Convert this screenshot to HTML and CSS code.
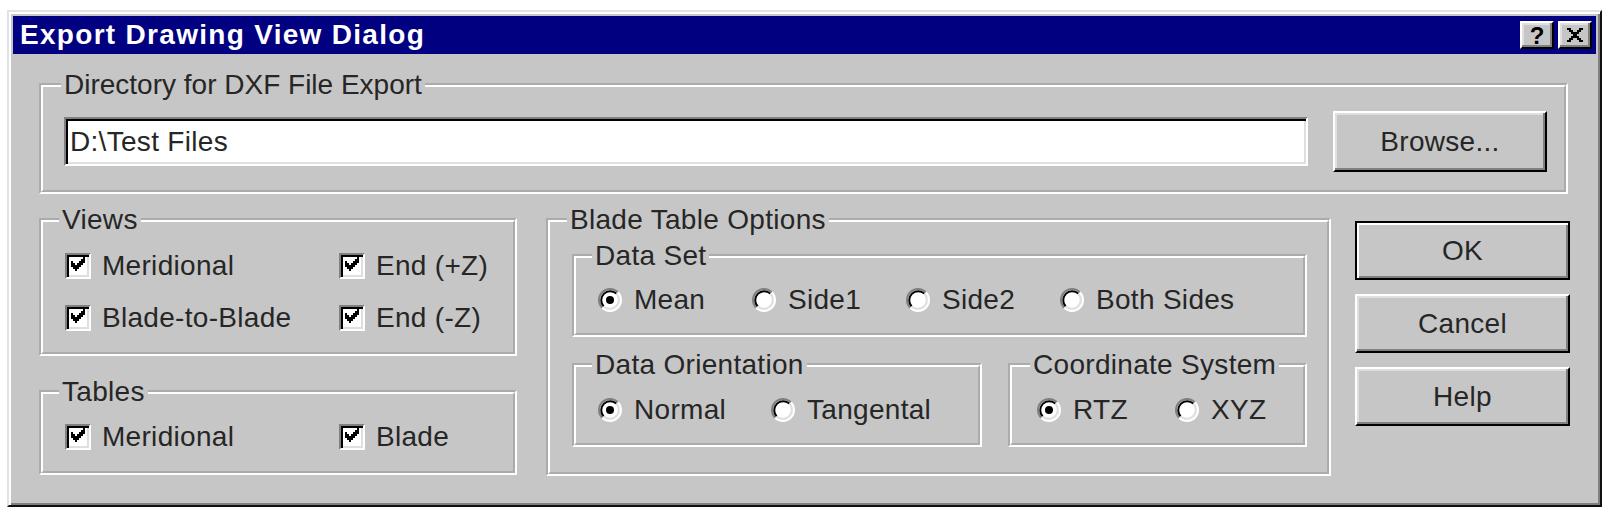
FILE: index.html
```html
<!DOCTYPE html>
<html>
<head>
<meta charset="utf-8">
<title>Export Drawing View Dialog</title>
<link rel="stylesheet" href="styles.css">
</head>
<body>
<div class="window">
  <div class="titlebar">
    <span class="title">Export Drawing View Dialog</span>
    <div class="tb-buttons">
      <span class="tb-btn help">?</span>
      <span class="tb-btn close">
        <svg width="16" height="14" viewBox="0 0 8 7" shape-rendering="crispEdges"><path d="M0 0h2v1H0zM6 0h2v1H6zM1 1h2v1H1zM5 1h2v1H5zM2 2h4v1H2zM3 3h2v1H3zM2 4h4v1H2zM1 5h2v1H1zM5 5h2v1H5zM0 6h2v1H0zM6 6h2v1H6z" fill="#000"/></svg>
      </span>
    </div>
  </div>
  <div class="client">
    <fieldset class="group dir">
      <legend>Directory for DXF File Export</legend>
      <div class="dir-row">
        <div class="textbox">D:\Test Files</div>
        <div class="btn browse">Browse...</div>
      </div>
    </fieldset>

    <div class="lower">
      <div class="left-col">
        <fieldset class="group views">
          <legend>Views</legend>
          <div class="check-grid">
            <div class="check"><span class="cbox"><svg viewBox="0 0 9 9" shape-rendering="crispEdges"><path d="M1 2h1v3H1zM2 3h1v3H2zM3 4h1v3H3zM4 3h1v3H4zM5 2h1v3H5zM6 1h1v3H6zM7 0h1v3H7z" fill="#000"/></svg></span><span>Meridional</span></div>
            <div class="check"><span class="cbox"><svg viewBox="0 0 9 9" shape-rendering="crispEdges"><path d="M1 2h1v3H1zM2 3h1v3H2zM3 4h1v3H3zM4 3h1v3H4zM5 2h1v3H5zM6 1h1v3H6zM7 0h1v3H7z" fill="#000"/></svg></span><span>End (+Z)</span></div>
            <div class="check"><span class="cbox"><svg viewBox="0 0 9 9" shape-rendering="crispEdges"><path d="M1 2h1v3H1zM2 3h1v3H2zM3 4h1v3H3zM4 3h1v3H4zM5 2h1v3H5zM6 1h1v3H6zM7 0h1v3H7z" fill="#000"/></svg></span><span>Blade-to-Blade</span></div>
            <div class="check"><span class="cbox"><svg viewBox="0 0 9 9" shape-rendering="crispEdges"><path d="M1 2h1v3H1zM2 3h1v3H2zM3 4h1v3H3zM4 3h1v3H4zM5 2h1v3H5zM6 1h1v3H6zM7 0h1v3H7z" fill="#000"/></svg></span><span>End (-Z)</span></div>
          </div>
        </fieldset>
        <fieldset class="group tables">
          <legend>Tables</legend>
          <div class="check-grid">
            <div class="check"><span class="cbox"><svg viewBox="0 0 9 9" shape-rendering="crispEdges"><path d="M1 2h1v3H1zM2 3h1v3H2zM3 4h1v3H3zM4 3h1v3H4zM5 2h1v3H5zM6 1h1v3H6zM7 0h1v3H7z" fill="#000"/></svg></span><span>Meridional</span></div>
            <div class="check"><span class="cbox"><svg viewBox="0 0 9 9" shape-rendering="crispEdges"><path d="M1 2h1v3H1zM2 3h1v3H2zM3 4h1v3H3zM4 3h1v3H4zM5 2h1v3H5zM6 1h1v3H6zM7 0h1v3H7z" fill="#000"/></svg></span><span>Blade</span></div>
          </div>
        </fieldset>
      </div>

      <fieldset class="group blade">
        <legend>Blade Table Options</legend>
        <fieldset class="group dataset">
          <legend>Data Set</legend>
          <div class="radio-row cols-154">
            <div class="radio"><svg class="rdo" viewBox="0 0 12 12"><circle cx="6" cy="6" r="5" fill="#fff"/><path d="M2.11 9.89A5.5 5.5 0 0 1 9.89 2.11" fill="none" stroke="#808080"/><path d="M2.82 9.18A4.5 4.5 0 0 1 9.18 2.82" fill="none" stroke="#000"/><path d="M9.89 2.11A5.5 5.5 0 0 1 2.11 9.89" fill="none" stroke="#fff"/><path d="M9.18 2.82A4.5 4.5 0 0 1 2.82 9.18" fill="none" stroke="#dfdfdf"/><circle cx="6" cy="6" r="2" fill="#000"/></svg><span>Mean</span></div>
            <div class="radio"><svg class="rdo" viewBox="0 0 12 12"><circle cx="6" cy="6" r="5" fill="#fff"/><path d="M2.11 9.89A5.5 5.5 0 0 1 9.89 2.11" fill="none" stroke="#808080"/><path d="M2.82 9.18A4.5 4.5 0 0 1 9.18 2.82" fill="none" stroke="#000"/><path d="M9.89 2.11A5.5 5.5 0 0 1 2.11 9.89" fill="none" stroke="#fff"/><path d="M9.18 2.82A4.5 4.5 0 0 1 2.82 9.18" fill="none" stroke="#dfdfdf"/></svg><span>Side1</span></div>
            <div class="radio"><svg class="rdo" viewBox="0 0 12 12"><circle cx="6" cy="6" r="5" fill="#fff"/><path d="M2.11 9.89A5.5 5.5 0 0 1 9.89 2.11" fill="none" stroke="#808080"/><path d="M2.82 9.18A4.5 4.5 0 0 1 9.18 2.82" fill="none" stroke="#000"/><path d="M9.89 2.11A5.5 5.5 0 0 1 2.11 9.89" fill="none" stroke="#fff"/><path d="M9.18 2.82A4.5 4.5 0 0 1 2.82 9.18" fill="none" stroke="#dfdfdf"/></svg><span>Side2</span></div>
            <div class="radio"><svg class="rdo" viewBox="0 0 12 12"><circle cx="6" cy="6" r="5" fill="#fff"/><path d="M2.11 9.89A5.5 5.5 0 0 1 9.89 2.11" fill="none" stroke="#808080"/><path d="M2.82 9.18A4.5 4.5 0 0 1 9.18 2.82" fill="none" stroke="#000"/><path d="M9.89 2.11A5.5 5.5 0 0 1 2.11 9.89" fill="none" stroke="#fff"/><path d="M9.18 2.82A4.5 4.5 0 0 1 2.82 9.18" fill="none" stroke="#dfdfdf"/></svg><span>Both Sides</span></div>
          </div>
        </fieldset>
        <div class="sub-row">
          <fieldset class="group orient">
            <legend>Data Orientation</legend>
            <div class="radio-row cols-173">
              <div class="radio"><svg class="rdo" viewBox="0 0 12 12"><circle cx="6" cy="6" r="5" fill="#fff"/><path d="M2.11 9.89A5.5 5.5 0 0 1 9.89 2.11" fill="none" stroke="#808080"/><path d="M2.82 9.18A4.5 4.5 0 0 1 9.18 2.82" fill="none" stroke="#000"/><path d="M9.89 2.11A5.5 5.5 0 0 1 2.11 9.89" fill="none" stroke="#fff"/><path d="M9.18 2.82A4.5 4.5 0 0 1 2.82 9.18" fill="none" stroke="#dfdfdf"/><circle cx="6" cy="6" r="2" fill="#000"/></svg><span>Normal</span></div>
              <div class="radio"><svg class="rdo" viewBox="0 0 12 12"><circle cx="6" cy="6" r="5" fill="#fff"/><path d="M2.11 9.89A5.5 5.5 0 0 1 9.89 2.11" fill="none" stroke="#808080"/><path d="M2.82 9.18A4.5 4.5 0 0 1 9.18 2.82" fill="none" stroke="#000"/><path d="M9.89 2.11A5.5 5.5 0 0 1 2.11 9.89" fill="none" stroke="#fff"/><path d="M9.18 2.82A4.5 4.5 0 0 1 2.82 9.18" fill="none" stroke="#dfdfdf"/></svg><span>Tangental</span></div>
            </div>
          </fieldset>
          <fieldset class="group coord">
            <legend>Coordinate System</legend>
            <div class="radio-row cols-138">
              <div class="radio"><svg class="rdo" viewBox="0 0 12 12"><circle cx="6" cy="6" r="5" fill="#fff"/><path d="M2.11 9.89A5.5 5.5 0 0 1 9.89 2.11" fill="none" stroke="#808080"/><path d="M2.82 9.18A4.5 4.5 0 0 1 9.18 2.82" fill="none" stroke="#000"/><path d="M9.89 2.11A5.5 5.5 0 0 1 2.11 9.89" fill="none" stroke="#fff"/><path d="M9.18 2.82A4.5 4.5 0 0 1 2.82 9.18" fill="none" stroke="#dfdfdf"/><circle cx="6" cy="6" r="2" fill="#000"/></svg><span>RTZ</span></div>
              <div class="radio"><svg class="rdo" viewBox="0 0 12 12"><circle cx="6" cy="6" r="5" fill="#fff"/><path d="M2.11 9.89A5.5 5.5 0 0 1 9.89 2.11" fill="none" stroke="#808080"/><path d="M2.82 9.18A4.5 4.5 0 0 1 9.18 2.82" fill="none" stroke="#000"/><path d="M9.89 2.11A5.5 5.5 0 0 1 2.11 9.89" fill="none" stroke="#fff"/><path d="M9.18 2.82A4.5 4.5 0 0 1 2.82 9.18" fill="none" stroke="#dfdfdf"/></svg><span>XYZ</span></div>
            </div>
          </fieldset>
        </div>
      </fieldset>

      <div class="buttons">
        <div class="btn default">OK</div>
        <div class="btn">Cancel</div>
        <div class="btn">Help</div>
      </div>
    </div>
  </div>
</div>
</body>
</html>
```

FILE: styles.css
```css
html, body {
  margin: 0;
  padding: 0;
  background: #ffffff;
}

body {
  font-family: "Liberation Sans", Arial, sans-serif;
  font-size: 28px;
  letter-spacing: 0.3px;
  color: #262626;
}

.window {
  box-sizing: border-box;
  width: 1595px;
  height: 497px;
  margin: 10px 0 0 7px;
  background: #c6c6c6;
  border: 2px solid;
  border-color: #e2e2e2 #111111 #111111 #e2e2e2;
  box-shadow: inset 2px 2px #ffffff, inset -2px -2px #808080;
  padding: 4px;
  display: flex;
  flex-direction: column;
}

.titlebar {
  height: 38px;
  background: #000080;
  display: flex;
  align-items: center;
  justify-content: space-between;
  padding: 0 4px 0 7px;
  flex: none;
}

.title {
  color: #ffffff;
  font-weight: bold;
  font-size: 28px;
  letter-spacing: 1.3px;
  line-height: 32px;
  white-space: nowrap;
}

.tb-buttons {
  display: flex;
  gap: 4px;
}

.tb-btn {
  box-sizing: border-box;
  width: 34px;
  height: 28px;
  background: #c6c6c6;
  border: 2px solid;
  border-color: #ffffff #000000 #000000 #ffffff;
  box-shadow: inset -2px -2px #808080, inset 2px 2px #dfdfdf;
  display: flex;
  align-items: center;
  justify-content: center;
}

.tb-btn.help {
  font-weight: bold;
  font-size: 24px;
  line-height: 24px;
  letter-spacing: 0;
  color: #000;
  padding-top: 1px;
}

.tb-btn svg {
  display: block;
}

.client {
  flex: 1;
  display: flex;
  flex-direction: column;
}

/* group boxes */
.group {
  margin: 0;
  min-width: 0;
  border: 4px groove #ffffff;
  padding: 0;
}

.group > legend {
  font-size: 28px;
  line-height: 32px;
  padding: 0 3px;
  margin-left: -6px;
  white-space: nowrap;
}

.dir {
  margin: 15px 28px 0 26px;
  padding: 10px 17px 18px 21px;
}

.dir > legend {
  margin-left: -3px;
  letter-spacing: 0;
}

.dir-row {
  display: flex;
  align-items: center;
  gap: 25px;
}

.textbox {
  flex: 1;
  box-sizing: border-box;
  height: 49px;
  background: #ffffff;
  border: 2px solid;
  border-color: #808080 #ffffff #ffffff #808080;
  box-shadow: inset 2px 2px #000000, inset -2px -2px #dfdfdf;
  padding: 0 4px;
  display: flex;
  align-items: center;
  line-height: 32px;
  white-space: nowrap;
}

.btn {
  box-sizing: border-box;
  height: 59px;
  background: #c6c6c6;
  border: 2px solid;
  border-color: #ffffff #000000 #000000 #ffffff;
  box-shadow: inset -2px -2px #808080, inset 2px 2px #dfdfdf;
  display: flex;
  align-items: center;
  justify-content: center;
  line-height: 32px;
  white-space: nowrap;
}

.browse {
  width: 214px;
  height: 61px;
  flex: none;
}

.btn.default {
  border-color: #000000;
  box-shadow: inset 2px 2px #ffffff, inset -2px -2px #808080;
}

/* lower area */
.lower {
  display: flex;
  align-items: flex-start;
  margin: 10px 0 0 26px;
}

.left-col {
  width: 478px;
  flex: none;
  display: flex;
  flex-direction: column;
  gap: 20px;
}

.views {
  padding: 4px 10px 8px 22px;
}

.tables {
  padding: 3px 10px 8px 22px;
}

.check-grid {
  display: grid;
  grid-template-columns: 274px auto;
  grid-auto-rows: 52px;
}

.check {
  display: flex;
  align-items: center;
  gap: 11px;
  white-space: nowrap;
}

.cbox {
  box-sizing: border-box;
  width: 26px;
  height: 26px;
  flex: none;
  background: #ffffff;
  border: 2px solid;
  border-color: #808080 #ffffff #ffffff #808080;
  box-shadow: inset 2px 2px #000000, inset -2px -2px #dfdfdf;
}

.cbox svg {
  display: block;
  width: 18px;
  height: 18px;
  margin: 2px;
}

.blade {
  width: 785px;
  box-sizing: border-box;
  flex: none;
  margin-left: 29px;
  padding: 4px 20px 25px 22px;
}

.blade > legend {
  margin-left: -5px;
}

.dataset {
  padding: 8px 10px 13px 22px;
}

.radio-row {
  display: grid;
  grid-auto-rows: 40px;
}

.cols-154 { grid-template-columns: repeat(4, 154px); }
.cols-173 { grid-template-columns: repeat(2, 173px); }
.cols-138 { grid-template-columns: repeat(2, 138px); }

.radio {
  display: flex;
  align-items: center;
  gap: 12px;
  white-space: nowrap;
}

.rdo {
  display: block;
  width: 24px;
  height: 24px;
  flex: none;
}

.sub-row {
  display: flex;
  gap: 26px;
  margin-top: 12px;
}

.orient {
  width: 410px;
  box-sizing: border-box;
  flex: none;
  padding: 9px 10px 13px 22px;
}

.coord {
  flex: 1;
  padding: 9px 10px 13px 25px;
}

.coord > legend {
  margin-left: -7px;
}

.buttons {
  width: 215px;
  flex: none;
  margin: 17px 0 0 24px;
  display: flex;
  flex-direction: column;
  gap: 14px;
}
```
